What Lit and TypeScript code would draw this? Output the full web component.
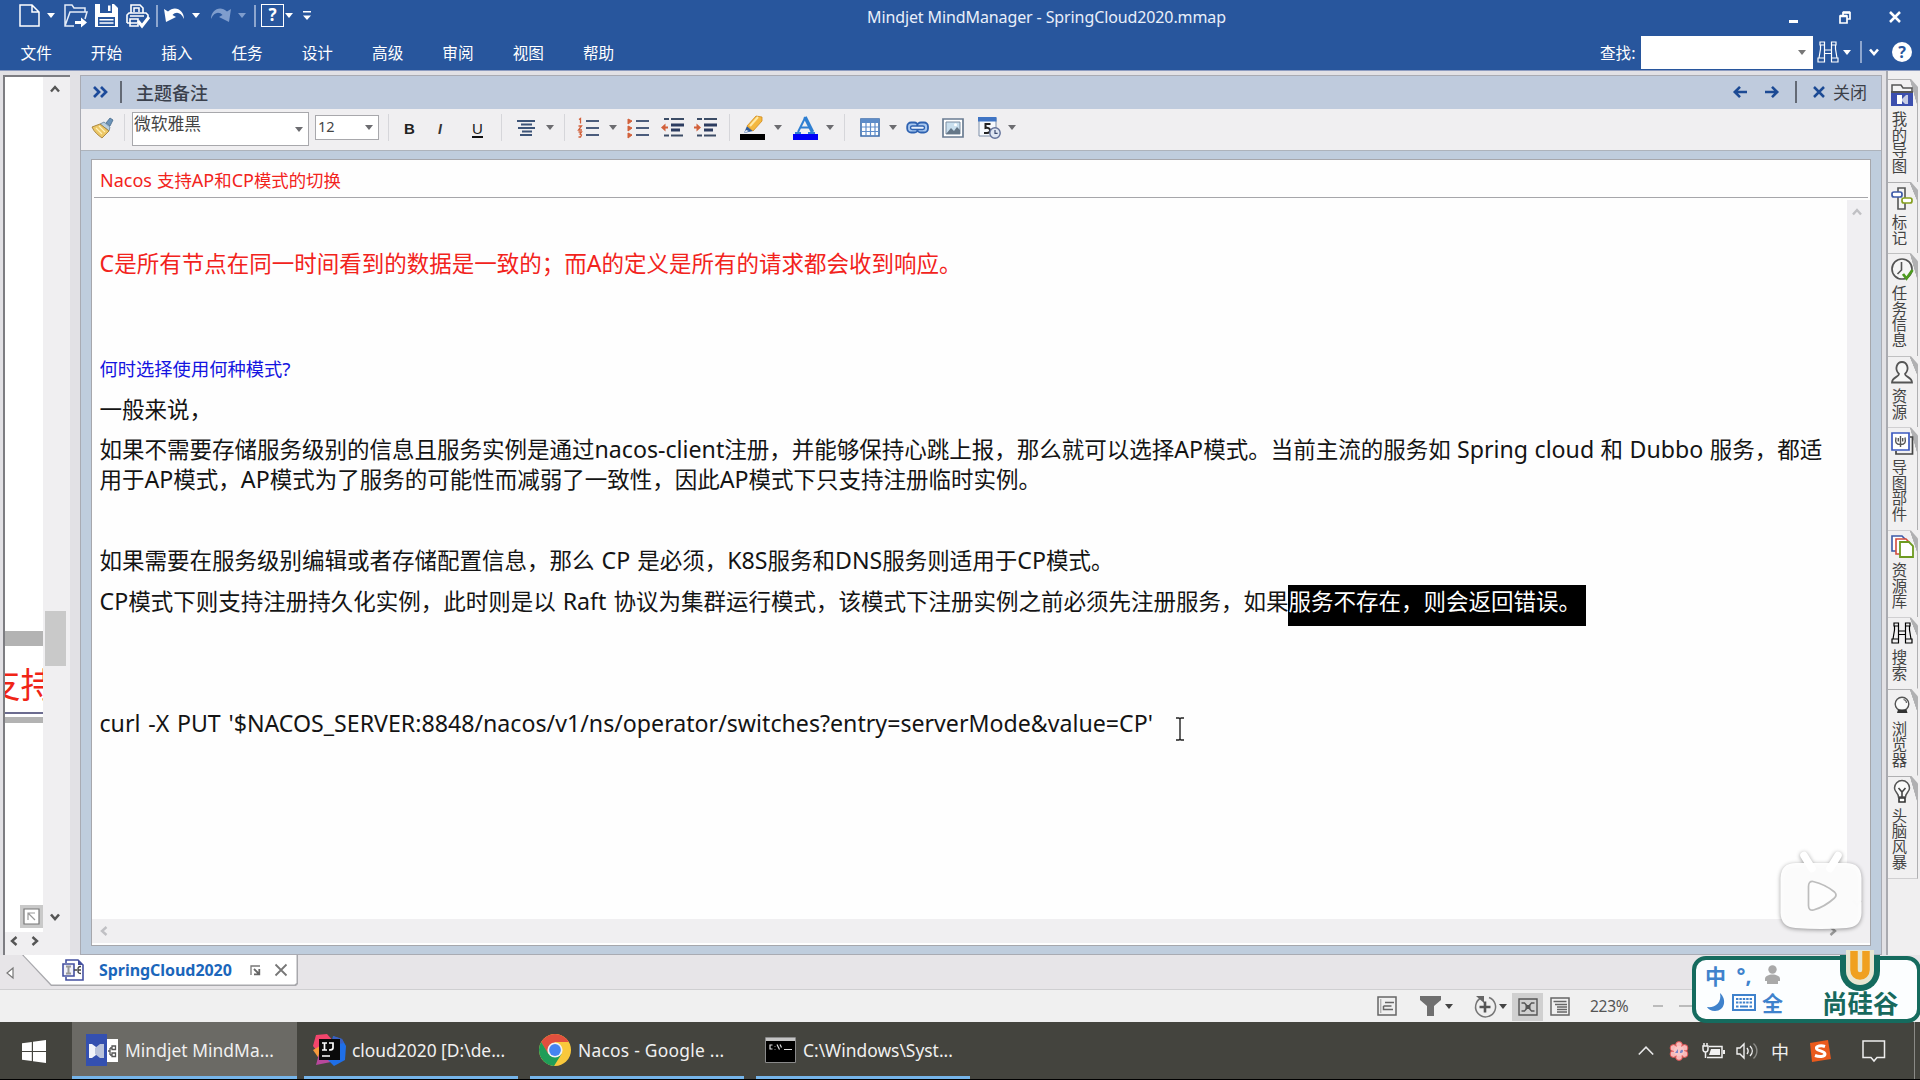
import { LitElement, html, css, svg } from "lit";
import { customElement, property } from "lit/decorators.js";

/* Splits a string so that Latin runs get their own face and spacing. */
const mix = (text: string) =>
  text.split(/([\x20-\x7e]+)/).map((part) =>
    /^[\x20-\x7e]+$/.test(part) ? html`<span class="lat">${part}</span>` : part
  );

const latin = css`
  .lat { font-family: "Noto Sans", "Open Sans", sans-serif; font-size: 1.03em; line-height: 1; white-space: pre; word-spacing: .4px; }
`;

const base = css`
  * { box-sizing: border-box; }
  svg { display: block; overflow: visible; }
`;

const art: Record<string, { w: number; h: number; g: unknown }> = {
  caret: { w: 8, h: 5, g: svg`<path d="M0 0h8L4 5z" fill="currentColor"/>` },
  vbar: { w: 2, h: 22, g: svg`<path d="M1 0v22" stroke="currentColor" stroke-width="1.4"/>` },
  newDoc: { w: 21, h: 23, g: svg`<path d="M1 1h12l7 7v14H1z M13 1v7h7" fill="none" stroke="#fff" stroke-width="1.5"/>` },
  open: { w: 24, h: 23, g: svg`<path d="M10 22H1V1h7l2 3h11v4M1 22l5-14h17l-2 7" fill="none" stroke="#e4ecf8" stroke-width="1.5"/><path d="M11 17h6v-3.500l6 5-6 5V20h-6z" fill="#fff"/>` },
  save: { w: 23, h: 23, g: svg`<path d="M0 0h19l4 4v19H0z" fill="#fff"/><path d="M5 0h12v9H5z M3 13h17v9H3z" fill="#28569d"/><path d="M13 1.500h2.500v5.500H13z M4.500 15h14v1.600h-14z M4.500 18.200h14v1.600h-14z" fill="#fff"/>` },
  print: { w: 24, h: 23, g: svg`<path d="M5 9V1h9l3 3v5M1 19v-8l2-2h17l2 2v3M1 19h10M4 22h8V15H4z" fill="none" stroke="#fff" stroke-width="1.600"/><path d="M8 8V4h5v4M4 12h14" stroke="#fff" stroke-width="1.500" fill="none"/><path d="M12 17l4 5 7-9" fill="none" stroke="#fff" stroke-width="3"/>` },
  undo: { w: 21, h: 17, g: svg`<path d="M0 2l2 13 10-5-3.500-2C12 4 17 5 20 12 20 3 11-2 4 4.500z" fill="currentColor"/>` },
  redo: { w: 21, h: 17, g: svg`<path d="M21 2l-2 13L9 10l3.500-2C9 4 4 5 1 12 1 3 10-2 17 4.500z" fill="currentColor"/>` },
  more: { w: 8, h: 9, g: svg`<path d="M0 0h8v1.500H0z M0 4.500h8L4 9z" fill="#fff"/>` },
  min: { w: 9, h: 3, g: svg`<path d="M0 0h9v3H0z" fill="#fff"/>` },
  restore: { w: 12, h: 13, g: svg`<path d="M4 4V1.500h7V8H8M1 5h7v7H1z" fill="none" stroke="#fff" stroke-width="1.700"/><path d="M1 5h7 M4 1.500h7" stroke="#fff" stroke-width="2.400"/>` },
  cross: { w: 12, h: 12, g: svg`<path d="M1 1l10 10M11 1L1 11" stroke="currentColor" stroke-width="2.500"/>` },
  thinCross: { w: 12, h: 12, g: svg`<path d="M.5.5l11 11M11.500.5l-11 11" stroke="#777" stroke-width="1.800"/>` },
  binoc: { w: 22, h: 22, g: svg`<path d="M3 1h4.500v3H3z M14.500 1H19v3h-4.500z M3.500 4v4L2 17M7.500 4v13M14.500 4v13M18.500 4v4L20 17 M7.500 9h7v3.500h-7z M1 17h6.500v4H1z M14.500 17H21v4h-6.500z" fill="none" stroke="currentColor" stroke-width="1.200"/>` },
  chevDown: { w: 10, h: 8, g: svg`<path d="M1 1.500l4 4.500 4-4.500" fill="none" stroke="currentColor" stroke-width="2.600"/>` },
  chevUp: { w: 10, h: 8, g: svg`<path d="M1 6.500L5 2l4 4.500" fill="none" stroke="currentColor" stroke-width="2.400"/>` },
  chevLeft: { w: 8, h: 10, g: svg`<path d="M6.500 1L2 5l4.500 4" fill="none" stroke="currentColor" stroke-width="2.400"/>` },
  chevRight: { w: 8, h: 10, g: svg`<path d="M1.500 1L6 5 1.500 9" fill="none" stroke="currentColor" stroke-width="2.400"/>` },
  dblRight: { w: 15, h: 12, g: svg`<path d="M1 1l5 5-5 5M8 1l5 5-5 5" fill="none" stroke="#1c4a9a" stroke-width="2.700"/>` },
  arrowL: { w: 14, h: 12, g: svg`<path d="M14 6H2M7 .8L1.800 6 7 11.200" fill="none" stroke="#1c4a94" stroke-width="2.600"/>` },
  arrowR: { w: 14, h: 12, g: svg`<path d="M0 6h12M7 .8L12.200 6 7 11.200" fill="none" stroke="#1c4a94" stroke-width="2.600"/>` },
  brush: { w: 21, h: 20, g: svg`<path d="M14 5l4-5 3 2-3 6z" fill="#6b93b8" stroke="#456a8c" stroke-width=".8"/><path d="M8 6l4-2 6 5-1 4z" fill="#b9cfe0" stroke="#5f7f98" stroke-width=".8"/><path d="M0 9l8-3 9 7-7 7C6 17 2 14 0 9z" fill="#ecc767" stroke="#a4803a" stroke-width=".9"/><path d="M4 10l6 6M7 8l6 6" stroke="#fff0b8" stroke-width="1.200"/>` },
  center: { w: 19, h: 16, g: svg`<path d="M0 1h18M4 4.500h11M1 8h17M5 11.500h10M3 15h12" stroke="#3d5478" stroke-width="2"/>` },
  numbered: { w: 21, h: 20, g: svg`<path d="M1 1.500l1.500-1v5M.5 8h3L.5 12h3.500M.5 14h3l-1.500 2 1.500 1-1 2H.5" fill="none" stroke="#d2603a" stroke-width="1.300"/><path d="M8 3h13M8 10h13M8 17h13" stroke="#4b5c7c" stroke-width="2.100"/>` },
  bullets: { w: 21, h: 20, g: svg`<path d="M0 1l4 2-4 3z M0 8l4 2-4 3z M0 15l4 2-4 3z" fill="#d2603a" stroke="#d2603a"/><path d="M8 3h13M8 10h13M8 17h13" stroke="#4b5c7c" stroke-width="2.100"/>` },
  outdent: { w: 23, h: 19, g: svg`<path d="M3 1h5M10 1h13M3 17.500h5M10 17.500h12" stroke="#3c4c66" stroke-width="1.800"/><path d="M10 7h13M10 12h9" stroke="#2c3c60" stroke-width="2.800"/><path d="M0 9.500l4.500-4v3H7v2H4.500v3z" fill="#d2603a"/>` },
  indent: { w: 23, h: 19, g: svg`<path d="M3 1h5M10 1h13M3 17.500h5M10 17.500h12" stroke="#3c4c66" stroke-width="1.800"/><path d="M10 7h13M10 12h9" stroke="#2c3c60" stroke-width="2.800"/><path d="M7 9.500l-4.500-4v3H0v2h2.500v3z" fill="#d2603a"/>` },
  marker: { w: 25, h: 24, g: svg`<path d="M0 18h25v6H0z" fill="#000"/><path d="M4 17l3-7 6 5z" fill="#2f5c9c"/><path d="M4 17l2-3 3 1z" fill="#e8edf5"/><path d="M7 10L16 0l6 1v4l-9 10z" fill="#f4b840" stroke="#d08c20" stroke-width=".8"/><path d="M10 10l8-9" stroke="#ffe9a6" stroke-width="2"/>` },
  fontColor: { w: 25, h: 24, g: svg`<path d="M0 18h25v6H0z" fill="#0000f6"/><path d="M5 16L12.500 1" fill="none" stroke="#2f7fd2" stroke-width="2"/><path d="M12 1l7.500 15" fill="none" stroke="#2f7fd2" stroke-width="3.600"/><path d="M8 11.500h9M2 17h6M15 17h7" stroke="#2f7fd2" stroke-width="2"/>` },
  table: { w: 20, h: 19, g: svg`<path d="M1 1h18v17H1z" fill="#fff" stroke="#3e6eac" stroke-width="1.600"/><path d="M1 1h18v4H1z" fill="#5d8cc8"/><path d="M1 9h18M1 13.500h18M6 5v13M10.500 5v13M15 5v13" stroke="#5f8dca" stroke-width="1.200"/>` },
  link: { w: 23, h: 13, g: svg`<rect x="1.200" y="1.500" width="11" height="10" rx="4" fill="#a9c8f0" stroke="#2f62b0" stroke-width="1.800"/><rect x="11" y="1.500" width="11" height="10" rx="4" fill="#a9c8f0" stroke="#2f62b0" stroke-width="1.800"/><rect x="4.500" y="5" width="14" height="3.500" rx="1.700" fill="#e8f1fc" stroke="#2f62b0" stroke-width="1.400"/>` },
  picture: { w: 22, h: 20, g: svg`<path d="M1 1h20v18H1z" fill="#fff" stroke="#6a7c92" stroke-width="1.700"/><path d="M4 4h14v12H4z" fill="#c9dfee" stroke="#7c8ea2" stroke-width="1"/><path d="M4 16l5-6 3 3 3-4 3 3v4z" fill="#657788"/><circle cx="13.500" cy="6.800" r="1.500" fill="#fff"/>` },
  date: { w: 23, h: 22, g: svg`<path d="M1 1h17v18H1z" fill="#f6f9fd" stroke="#7f8fa8" stroke-width="1"/><path d="M0 0h18.500v4.500H0z" fill="#3f74c4"/><path d="M12.500 7H7.500v4c5-1.500 6.500 5 1.500 5H6" fill="none" stroke="#222" stroke-width="2"/><circle cx="17" cy="16" r="5.200" fill="#dfe6f2" stroke="#62719a" stroke-width="1.400"/><path d="M17 13v3.300h2.600" fill="none" stroke="#3c4a70" stroke-width="1.200"/>` },
  fit: { w: 23, h: 23, g: svg`<path d="M0 0h23v23H0z" fill="#c9c9c9"/><path d="M4 4h15v15H4z" fill="#fff" stroke="#777" stroke-width="1.200"/><path d="M8 15V8h7M8 8l7 7" fill="none" stroke="#999" stroke-width="1.200"/>` },
  tri: { w: 8, h: 12, g: svg`<path d="M7 1v10L1 6z" fill="#fff" stroke="#777" stroke-width="1.200"/>` },
  mapDoc: { w: 22, h: 22, g: svg`<path d="M4 4V1h12l5 5v15H4v-3" fill="#fff" stroke="#4450a0" stroke-width="1.600"/><path d="M16 1v5h5z" fill="#4450a0"/><path d="M1 5h11v12H1z" fill="#f2f2fa" stroke="#4450a0" stroke-width="1.600"/><path d="M4 7.500h5M4 14.500h5M6.500 7.500v7" stroke="#999" stroke-width="2" fill="none"/><path d="M12 11h3M19 7.500c-3 0-3 1-3 3.500s0 3.500 3 3.500M16 11h3" fill="none" stroke="#444" stroke-width="1.400"/>` },
  popout: { w: 10, h: 10, g: svg`<path d="M1 10V1h9" fill="none" stroke="#777" stroke-width="1.300"/><path d="M4 4l5 5M9.300 4v5.300H4" fill="none" stroke="#666" stroke-width="1.800"/>` },
  stDoc: { w: 20, h: 20, g: svg`<path d="M1 1h18v18H1z" fill="none" stroke="#666" stroke-width="1.500"/><path d="M3.800 3v14" stroke="#999"/><path d="M8 6.500h9M6.500 10h8M6.500 10v3.500h5M10 13.500h6" fill="none" stroke="#666" stroke-width="1.500"/>` },
  funnel: { w: 21, h: 20, g: svg`<path d="M0 0h21v4l-7 6v10H7V10L0 4z" fill="#6f6f6f"/>` },
  addRound: { w: 22, h: 22, g: svg`<path d="M7 3a10 10 0 1 0 8-.5" fill="none" stroke="#777" stroke-width="1.500"/><path d="M2 1h8v7z" fill="#666"/><path d="M11 6.500v11M5.500 12h11" stroke="#555" stroke-width="2.600"/>` },
  mapView: { w: 20, h: 18, g: svg`<path d="M1 1h18v16H1z" fill="none" stroke="#555" stroke-width="1.400"/><path d="M3.500 5h3l7 8h3M3.500 13h3l7-8h3" fill="none" stroke="#555" stroke-width="1.300"/><path d="M7.500 7h5v4h-5z" fill="#555"/>` },
  outline: { w: 20, h: 19, g: svg`<path d="M1 1h18v17H1z" fill="none" stroke="#666" stroke-width="1.500"/><path d="M3.500 4.500h13M5 7.500h12M7 10h10M7 12.500h10M7 15h10" stroke="#666" stroke-width="1.400"/>` },
  minus: { w: 10, h: 2, g: svg`<path d="M0 1h10" stroke="#aaa" stroke-width="1.500"/>` },
  rail: { w: 40, h: 2, g: svg`<path d="M0 1h40" stroke="#aaa" stroke-width="1.500"/>` },
  win: { w: 24, h: 23, g: svg`<path d="M0 3.300L9.800 2v9H0z M11 1.800L24 0v11H11z M0 12h9.800v9L0 19.700z M11 12h13v11l-13-1.800z" fill="#fff"/>` },
  mindjet: { w: 32, h: 32, g: svg`<path d="M0 0h21v32H0z" fill="#3450b0"/><path d="M3 10h3l4 3v8l-4 3H3z" fill="#f2f4fa"/><path d="M9 14l5-4h4v14h-4l-5-4z" fill="#b9c2da"/><path d="M21 5h11v23H21z" fill="#fff"/><path d="M22 17h2M26 12h3.500v3.500H26zM26 19h3.500v3.500H26zM24 14v7M24 14h2M24 21h2" fill="none" stroke="#555" stroke-width="1.300"/>` },
  idea: { w: 33, h: 33, g: svg`<path d="M3 2l11-1 8 9L7 22 0 13z" fill="#f3456c"/><path d="M0 17l7-4v14z" fill="#f79a3c"/><path d="M3 32l4-15 11 12z" fill="#b8489c"/><path d="M20 3l9 3 4 7-1 14-11 6-6-6z" fill="#1f6fe8"/><path d="M20 3l9 3 2 4-10 2z" fill="#3a5fc0"/><path d="M6 6h21v21H6z" fill="#0a0a0a"/><path d="M9 10h5M11.500 10v7M9 17h5M16 10h4v5c0 2-2 2-4 2M9 23h8" fill="none" stroke="#fff" stroke-width="1.700"/>` },
  chrome: { w: 32, h: 32, g: svg`<circle cx="16" cy="16" r="16" fill="#f9c83c"/><path d="M16 8h13.850A16 16 0 0 0 2.150 8L9 20z" fill="#e2503e"/><path d="M2.150 8A16 16 0 0 0 15 32l7.500-12L16 16 9.500 20z" fill="#1f9d58"/><circle cx="16" cy="16" r="7.600" fill="#f2f2f2"/><circle cx="16" cy="16" r="5.900" fill="#4584f2"/>` },
  cmd: { w: 31, h: 26, g: svg`<path d="M.5.5h30v25H.5z" fill="#000" stroke="#8a8a8a"/><path d="M1 1h29v3H1z" fill="#c4c4c4"/><path d="M7.500 8H5v4h2.500M10 9v.500M10 12v.5M12 7.500l2.500 5M15 7.500l1.500 3M19 12.500h8" fill="none" stroke="#ddd" stroke-width="1.200"/>` },
  trayUp: { w: 16, h: 9, g: svg`<path d="M.8 8.500L8 1.200l7.200 7.300" fill="none" stroke="#e8e8e8" stroke-width="1.600"/>` },
  flower: { w: 20, h: 20, g: svg`<g fill="#f7b9b9" stroke="#e04848" stroke-width=".9"><circle cx="10" cy="4" r="3.400"/><circle cx="15.500" cy="7" r="3.400"/><circle cx="15.500" cy="13" r="3.400"/><circle cx="10" cy="16" r="3.400"/><circle cx="4.500" cy="13" r="3.400"/><circle cx="4.500" cy="7" r="3.400"/></g><circle cx="10" cy="10" r="5.200" fill="#f9c6c6"/><path d="M6 12l3-4v4zM11 12c0-4 3-4 3-2s-2 2-3 2z" fill="#7a86c8"/>` },
  power: { w: 23, h: 18, g: svg`<path d="M1 4v3c0 4 5 4 5 0V4zM2 1v3M5 1v3M3.500 10v6" fill="none" stroke="#f0f0f0" stroke-width="1.500"/><path d="M7 4.500h13v11H5" fill="none" stroke="#f0f0f0" stroke-width="1.500"/><path d="M9 7h9v6H7z M21 8h2v4h-2z" fill="#f0f0f0"/>` },
  sound: { w: 23, h: 18, g: svg`<path d="M1 6h3l4-4v14l-4-4H1z" fill="none" stroke="#f0f0f0" stroke-width="1.400"/><path d="M11 6c1.500 2 1.500 4 0 6M14 4c3 3 3 7 0 10" fill="none" stroke="#f0f0f0" stroke-width="1.400"/><path d="M17.500 1.500c4.500 4 4.500 11 0 15" fill="none" stroke="#8c8c88" stroke-width="1.400"/>` },
  sogou: { w: 22, h: 22, g: svg`<path d="M1 3L19 0l3 19-19 3z" fill="#ea5a1c"/><path d="M16 6.500c-4-1.500-9-.5-8.500 2S16 11 16 14s-6 3-10 1.500" fill="none" stroke="#fff" stroke-width="3"/>` },
  notice: { w: 24, h: 22, g: svg`<path d="M1 1h21.500v16.500H15L12 21l-3-3.500H1z" fill="none" stroke="#eee" stroke-width="1.500"/>` },
  person: { w: 15, h: 19, g: svg`<circle cx="7.500" cy="4.500" r="4.200" fill="#a9a9a9"/><path d="M0 14c0-6 15-6 15 0v2h-2v3H2v-3H0z" fill="#a9a9a9"/>` },
  moon: { w: 18, h: 18, g: svg`<path d="M13 0c7 6 5 18-5 18-4 0-7-2-8-4 8 1 15-4 13-14z" fill="#3f82cc"/>` },
  keys: { w: 24, h: 17, g: svg`<path d="M1 1h22v15H1z" fill="#fff" stroke="#3f82cc" stroke-width="2"/><path d="M4 5h16M4 8.500h16" stroke="#3f82cc" stroke-width="2" stroke-dasharray="2.400 1"/><path d="M4 12.500h2.500M8 12.500h8M17.500 12.500h2.500" stroke="#3f82cc" stroke-width="2"/>` },
  maps: { w: 22, h: 22, g: svg`<path d="M1 8V1h9l2 3h9v4" fill="#f4f4f4" stroke="#555" stroke-width="1.500"/><path d="M0 7h22v15H0z" fill="#3c4fae"/><path d="M0 7h22v2H0z" fill="#555"/><path d="M6 11h5v9H6z" fill="#fff"/><path d="M11 15l4-4h2v9h-3l-3-3z" fill="#c6cbe4"/>` },
  tags: { w: 22, h: 23, g: svg`<path d="M7 1h7v21H7z" fill="#f4f4f4" stroke="#555" stroke-width="1.600"/><rect x="1" y="5" width="10" height="5" rx="2" fill="#fff" stroke="#3c59a8" stroke-width="1.700"/><rect x="11" y="11" width="10" height="5" rx="2" fill="#fff" stroke="#86a020" stroke-width="1.700"/>` },
  clock: { w: 22, h: 22, g: svg`<circle cx="11" cy="11" r="10" fill="#f6f6f6" stroke="#555" stroke-width="1.700"/><path d="M10.500 4v8l-4 4" fill="none" stroke="#555" stroke-width="1.600"/><path d="M12 16l3.500 4.500L21.500 12" fill="none" stroke="#4d9a20" stroke-width="2.800"/>` },
  res: { w: 22, h: 23, g: svg`<path d="M8 13C3 8 6 1 11 1s8 7 3 12c0 3 7 3 7 8.500H1C1 16 8 16 8 13z" fill="#f6f6f6" stroke="#555" stroke-width="1.800"/>` },
  parts: { w: 22, h: 23, g: svg`<path d="M19 5h2.500v17H5v-3" fill="none" stroke="#444" stroke-width="1.700"/><path d="M1 1h17v17H1z" fill="#fff" stroke="#3c59c0" stroke-width="1.700"/><path d="M9.500 4v11M5 5.500c-1 5 0 7 4.500 7s5.500-2 4.500-7M7.300 6v3.500M11.700 6v3.500" fill="none" stroke="#555" stroke-width="1.400"/>` },
  lib: { w: 23, h: 23, g: svg`<path d="M1 1h10l3 3v12H1z" fill="#fff" stroke="#3c59a8" stroke-width="1.600"/><path d="M5 4h10l3 3v12H5z" fill="#fff" stroke="#d24c3c" stroke-width="1.600"/><path d="M9 7h9l4 4v11H9z" fill="#fff" stroke="#6d9a20" stroke-width="1.800"/>` },
  globe: { w: 22, h: 18, g: svg`<circle cx="11" cy="8" r="6.800" fill="#fafafa" stroke="#555" stroke-width="1.400"/><path d="M12.500 3.500c2 .5 3 2 3 3.500" fill="none" stroke="#666" stroke-width="1.200"/><path d="M7 13.500h8.500l1 3.500H6z" fill="#333"/>` },
  bulb: { w: 22, h: 23, g: svg`<path d="M7.500 17c0-4-4-5-4-9a7.500 7.500 0 0 1 15 0c0 4-4 5-4 9z" fill="#fafafa" stroke="#555" stroke-width="1.500"/><path d="M7.500 8l3.500 4 3.500-4M11 12v5" fill="none" stroke="#444" stroke-width="1.600"/><path d="M8 18h6v4H8z" fill="#fff" stroke="#333" stroke-width="1.600"/>` },
  ibeam: { w: 10, h: 24, g: svg`<path d="M1 1h3l1 1 1-1h3M5 2v20M1 23h3l1-1 1 1h3" fill="none" stroke="#222" stroke-width="1.400"/>` },
  tv: { w: 82, h: 78, g: svg`<path d="M24 3.500l8 13M58 3.500l-8 13" stroke="#fff" stroke-width="7.500" stroke-linecap="round"/><path d="M16 11h50q15 0 15.500 15v35q-.5 14-15 15-25.500 1.800-51 0Q1 75 .5 61V26Q1 11 16 11z" fill="#fff" fill-opacity=".96"/><path d="M33 29.500q-4.500-.5-4.500 5v19q0 5.500 5 4.500 11-3 21-12 3-3 0-6-9-7.500-21.500-10.500z" fill="#fdfdfd" stroke="#bdbdbd" stroke-width="1.700"/>` },
  logoU: { w: 42, h: 42, g: svg`<path d="M1 5h40v16a20 20 0 0 1-40 0z" fill="#156b5e"/><path d="M7 0h28v21a14 14 0 0 1-28 0z" fill="#e8e6d2"/><path d="M15 1v19a6 6 0 0 0 12 0V1" fill="none" stroke="#f0a020" stroke-width="7.500"/>` },
};

@customElement("ui-icon")
export class UiIcon extends LitElement {
  @property() name = "caret";
  static styles = css`:host { display: inline-block; line-height: 0; } svg { display: block; overflow: visible; }`;
  render() {
    const a = art[this.name];
    return html`<svg width=${a.w} height=${a.h} viewBox="0 0 ${a.w} ${a.h}">${a.g}</svg>`;
  }
}

@customElement("title-bar")
export class TitleBar extends LitElement {
  static styles = [base, latin, css`
    :host { display: block; height: 70px; background: #28569d; color: #fff; font-family: "Noto Sans CJK SC", sans-serif; }
    .top { display: grid; grid-template-columns: 867px 922px auto; height: 34px; }
    .quick { display: grid; height: 31px; padding-left: 19px; align-items: center; justify-items: start;
      grid-template-columns: 28px 17px 31px 31px 30px 8px 28px 18px 28px 16px 7px 24px 18px 20px; }
    .dim { color: #7f9dcd; }
    .light { color: #b9c9e4; }
    .help { width: 23px; height: 23px; border: 1.5px solid #fff; font: bold 17px/20px "Noto Sans", sans-serif; text-align: center; }
    .name { font: 16px/34px "Noto Sans", sans-serif; white-space: pre; letter-spacing: -.11px; color: #e9effa; }
    .wins { display: grid; grid-template-columns: 50px 50px 20px; height: 34px; align-items: center; }
    .wins .low { padding-top: 8px; }
    .bottom { display: grid; grid-template-columns: 1600px auto; height: 36px; }
    .menu { display: flex; padding-left: 1px; font-size: 15.6px; line-height: 36px; }
    .menu span { width: 70.3px; text-align: center; }
    .find { display: grid; grid-template-columns: 41px 176px 26px 17px 9px 23px 22px; height: 36px; align-items: center; font-size: 15.6px; justify-items: start; }
    .find .field { display: flex; justify-content: flex-end; align-items: center; width: 172px; height: 33px; padding-right: 7px; background: #fff; color: #777; }
    .q { width: 20px; height: 20px; border-radius: 50%; background: #fff; color: #28569d; font: bold 16px/20px "Noto Sans", sans-serif; text-align: center; }
  `];
  render() {
    const i = (n: string, c = "") => html`<ui-icon name=${n} class=${c}></ui-icon>`;
    return html`
      <div class="top">
        <div class="quick">
          ${i("newDoc")}${i("caret")}${i("open")}${i("save")}${i("print")}${i("vbar", "light")}${i("undo")}${i("caret")}
          ${i("redo", "dim")}${i("caret", "dim")}${i("vbar", "light")}<div class="help">?</div>${i("caret")}${i("more")}
        </div>
        <div class="name">Mindjet MindManager - SpringCloud2020.mmap</div>
        <div class="wins">${i("min", "low")}${i("restore")}${i("cross")}</div>
      </div>
      <div class="bottom">
        <nav class="menu">${["文件", "开始", "插入", "任务", "设计", "高级", "审阅", "视图", "帮助"].map((m) => html`<span>${m}</span>`)}</nav>
        <div class="find">
          <span>${mix("查找:")}</span><div class="field">${i("caret")}</div>${i("binoc")}${i("caret")}${i("vbar", "light")}
          ${i("chevDown")}<div class="q">?</div>
        </div>
      </div>`;
  }
}

@customElement("map-strip")
export class MapStrip extends LitElement {
  static styles = [base, css`
    :host { display: grid; grid-template-columns: 40px 25px; grid-template-rows: auto 23px; height: 880px; margin: 4px 10px 0 3px;
      border-left: 2px solid #7d7d82; border-top: 2px solid #7d7d82; background: #f0eff1; width: 67px; }
    .canvas { position: relative; background: #fff; overflow: hidden; width: 38px; }
    .bar { position: absolute; left: 0; width: 38px; background: #b3b3b3; }
    .b1 { top: 554px; height: 15px; }
    .b2 { top: 640px; height: 6px; }
    .rule { position: absolute; left: 0; top: 635px; width: 38px; height: 2px; background: #6c6c90; }
    .topic { position: absolute; left: -20px; top: 580px; color: #f02416; font: 35.5px/52px "Noto Sans CJK SC", sans-serif; white-space: nowrap; }
    .fit { position: absolute; left: 15px; top: 828px; }
    .scroll { display: flex; flex-direction: column; padding: 8px 10px 11px 5px; color: #555; }
    .thumb { width: 21px; height: 55px; background: #c9c9c9; margin: 518px 0 auto -5px; flex: none; }
    .ends { display: flex; gap: 13px; padding: 4px 0 0 5px; color: #555; }
  `];
  render() {
    return html`
      <div class="canvas">
        <div class="bar b1"></div><div class="topic">支持</div><div class="rule"></div><div class="bar b2"></div>
        <ui-icon class="fit" name="fit"></ui-icon>
      </div>
      <div class="scroll"><ui-icon name="chevUp"></ui-icon><div class="thumb"></div><ui-icon name="chevDown"></ui-icon></div>
      <div class="ends"><ui-icon name="chevLeft"></ui-icon><ui-icon name="chevRight"></ui-icon></div>`;
  }
}

@customElement("note-panel")
export class NotePanel extends LitElement {
  static styles = [base, latin, css`
    :host { display: flex; flex-direction: column; width: 1802px; height: 880px; margin-top: 4px; border: 1.5px solid #a9abb3; background: #bfcddd;
      font-family: "Noto Sans CJK SC", sans-serif; }
    .head { display: grid; grid-template-columns: 27px 16px 1597px 32px 30px 18px 20px auto; height: 33px; padding: 0 0 1px 12px; align-items: center; justify-items: start; background: #bfcbdd; color: #3c4048; flex: none; }
    .head .t { font-size: 18px; font-weight: 500; line-height: 30px; color: #3a404c; }
    .head .c { font-size: 17px; line-height: 30px; }
    .head .x { color: #1c4a94; }
    .tools { display: grid; height: 42px; flex: none; padding-left: 11px; align-items: center; justify-items: start; background: #f0eff1; color: #6c6c70;
      border-bottom: 1.5px solid #adb3bb; padding-bottom: 9px;
      grid-template-columns: 32px 8px 183px 73px 16px 32px 35px 30px 16px 29px 18px 14px 31px 19px 33px 33px 35px 11px 34px 19px 33px 18px 16px 29px 17px 36px 36px 30px 8px; }
    .sep { width: 1px; height: 27px; background: #d6d6da; }
    .face, .size { display: flex; justify-content: space-between; background: #fff; border: 1.5px solid #a8a8ac; color: #444; }
    .face { width: 177px; height: 34px; align-self: start; margin-top: 3px; padding: 0 5px 0 1px; font-size: 16.8px; line-height: 21px; }
    .face ui-icon { margin-top: 14px; }
    .size { width: 64px; height: 25px; padding: 0 5px 0 2px; font-family: "Noto Sans"; font-size: 14.5px; line-height: 20px; }
    .size ui-icon { margin-top: 9px; }
    .face ui-icon, .size ui-icon { color: #6c6c70; }
    .b { font: bold 15px/20px "Liberation Sans"; color: #222; padding-top: 3px; }
    .i { font: italic bold 14px/20px "Liberation Sans"; color: #333; padding: 3px 0 0 2px; }
    .u { font: 15px/14px "Liberation Sans"; color: #222; border-bottom: 2.5px solid #111; margin: 4px 0 0 1px; padding: 0; }
    .editor { display: flex; flex-direction: column; margin: 8px 10px 0 10px; height: 787px; border: 1.5px solid #a6a7ac; background: #fefefe; }
    .topic { height: 38px; margin: 0 2px; border-bottom: 1.5px solid #a6a6aa; padding-left: 6px; font-size: 17.4px; line-height: 40px; color: #f2231c; flex: none; }
    .topic .lat { font-size: 18px; }
    .area { display: grid; grid-template-columns: 1fr 23px; grid-template-rows: 721px 24px; }
    .text { padding: 48.5px 0 0 7.5px; font-size: 22.5px; line-height: 30px; color: #141414; white-space: nowrap; }
    p { margin: 0; }
    .red { color: #f2231c; }
    .blue { margin-top: 76px; font-size: 18.3px; color: #1414e0; }
    .near { margin-top: 10.5px; }
    .first { margin-top: 10px; }
    .far { margin-top: 50.5px; }
    .last { margin-top: 11px; }
    .last .lat, .far .lat { word-spacing: 1px; }
    .code { margin-top: 92px; }
    .code .lat { word-spacing: 1.7px; }
    .sel { display: inline-block; vertical-align: top; height: 41px; line-height: 30px; margin: 0 0 -11px; padding: 0 5px 0 0; background: #000; color: #fff; }
    .v { display: flex; flex-direction: column; justify-content: space-between; background: #f0eff2; margin-top: 2px; padding: 8px 5px 12px; color: #c0c0c4; }
    .h { grid-column: 1 / 3; display: flex; justify-content: space-between; align-items: center; background: #f0eff1; padding: 0 33px 0 8px; color: #c0c0c4; }
    .h .r { color: #999; }
  `];
  render() {
    const i = (n: string, c = "") => html`<ui-icon name=${n} class=${c}></ui-icon>`;
    const sep = html`<div class="sep"></div>`;
    return html`
      <header class="head">${i("dblRight")}${i("vbar")}<span class="t">主题备注</span>${i("arrowL")}${i("arrowR")}${i("vbar")}${i("cross", "x")}<span class="c">关闭</span></header>
      <div class="tools">
        ${i("brush")}${sep}<div class="face">微软雅黑${i("caret")}</div><div class="size">12${i("caret")}</div>${sep}
        <span class="b">B</span><span class="i">I</span><span class="u">U</span>${sep}${i("center")}${i("caret")}${sep}
        ${i("numbered")}${i("caret")}${i("bullets")}${i("outdent")}${i("indent")}${sep}${i("marker")}${i("caret")}
        ${i("fontColor")}${i("caret")}${sep}${i("table")}${i("caret")}${i("link")}${i("picture")}${i("date")}${i("caret")}
      </div>
      <section class="editor">
        <div class="topic">${mix("Nacos 支持AP和CP模式的切换")}</div>
        <div class="area">
          <article class="text">
            <p class="red">${mix("C是所有节点在同一时间看到的数据是一致的；而A的定义是所有的请求都会收到响应。")}</p>
            <p class="blue">${mix("何时选择使用何种模式?")}</p>
            <p class="first">一般来说，</p>
            <p class="near">${mix("如果不需要存储服务级别的信息且服务实例是通过nacos-client注册，并能够保持心跳上报，那么就可以选择AP模式。当前主流的服务如 Spring cloud 和 Dubbo 服务，都适")}<br />${mix("用于AP模式，AP模式为了服务的可能性而减弱了一致性，因此AP模式下只支持注册临时实例。")}</p>
            <p class="far">${mix("如果需要在服务级别编辑或者存储配置信息，那么 CP 是必须，K8S服务和DNS服务则适用于CP模式。")}</p>
            <p class="last">${mix("CP模式下则支持注册持久化实例，此时则是以 Raft 协议为集群运行模式，该模式下注册实例之前必须先注册服务，如果")}<span class="sel">服务不存在，则会返回错误。</span></p>
            <p class="code">${mix("curl -X PUT '$NACOS_SERVER:8848/nacos/v1/ns/operator/switches?entry=serverMode&value=CP'")}</p>
          </article>
          <div class="v">${i("chevUp")}${i("chevDown")}</div>
          <div class="h">${i("chevLeft")}${i("chevRight", "r")}</div>
        </div>
      </section>`;
  }
}

@customElement("side-tabs")
export class SideTabs extends LitElement {
  static styles = [base, css`
    :host { display: block; width: 34px; height: 885px; margin-left: 4px; padding-top: 8px; border-left: 2px solid #a9aab0; background: #f0eff0; }
    .tab { display: flex; flex-direction: column; align-items: center; width: 30px; padding: 3px 1px 0 0; border: 1.5px solid #b0b0b2; border-left: 0; border-bottom: 0;
      background: linear-gradient(to bottom left, #b0b0b2 6.5px, #f1f0f1 7px); clip-path: polygon(0 0, 23px 0, 100% 8px, 100% 100%, 0 100%); }
    .tab:last-child { border-bottom: 1.5px solid #b0b0b2; }
    .n2 { height: 71.200px; } .n3 { height: 87px; } .n4 { height: 103px; }
    .pic { height: 24px; display: flex; align-items: center; }
    .word { width: 16px; margin: 4px 5px 0 0; font: 15.4px/15.5px "Noto Sans CJK SC", sans-serif; color: #444; word-break: break-all; text-align: center; }
  `];
  render() {
    const tabs = [["maps", "我的导图"], ["tags", "标记"], ["clock", "任务信息"], ["res", "资源"], ["parts", "导图部件"], ["lib", "资源库"], ["binoc", "搜索"], ["globe", "浏览器"], ["bulb", "头脑风暴"]];
    return html`${tabs.map(([n, t]) => html`<div class="tab n${t.length}"><div class="pic"><ui-icon name=${n}></ui-icon></div><div class="word">${t}</div></div>`)}`;
  }
}

@customElement("doc-tabs")
export class DocTabs extends LitElement {
  static styles = [base, css`
    :host { display: grid; grid-template-columns: 22px 276px; height: 35px; background: #e7e5e8; border-bottom: 1.5px solid #cfcfd1; }
    .prev { padding: 10px 0 0 6px; }
    .tab { display: grid; grid-template-columns: 40px 37px 151px 25px auto; align-items: center; height: 31px; padding-bottom: 2px; background: #a8a8ac; clip-path: polygon(0 0, 100% 0, 100% 29px, 274px 100%, 29px 100%); position: relative; }
    .tab::before { content: ""; position: absolute; inset: 0 1.5px 1.5px 1.5px; background: #fff; clip-path: polygon(0 0, 100% 0, 100% 28px, 271px 100%, 28px 100%); }
    .tab > * { position: relative; }
    .name { font: bold 16px/28px "Noto Sans", sans-serif; letter-spacing: -.05px; color: #1b66bb; }
  `];
  render() {
    return html`<div class="prev"><ui-icon name="tri"></ui-icon></div>
      <div class="tab"><span></span><ui-icon name="mapDoc"></ui-icon><span class="name">SpringCloud2020</span><ui-icon name="popout"></ui-icon><ui-icon name="thinCross"></ui-icon></div>`;
  }
}

@customElement("status-bar")
export class StatusBar extends LitElement {
  static styles = [base, css`
    :host { display: grid; grid-template-columns: 43px 25px 29px 25px 13px 38px 40px 63px 26px 40px; height: 32px; padding-left: 1377px; align-items: center; justify-items: start; background: #f0f0f0; color: #444; }
    .on { display: flex; align-items: center; justify-content: center; width: 31px; height: 28px; background: #d0d0d0; margin-top: 2px; }
    .pct { font: 15.5px/30px "Noto Sans", sans-serif; color: #555; letter-spacing: -.3px; }
  `];
  render() {
    const i = (n: string) => html`<ui-icon name=${n}></ui-icon>`;
    return html`${i("stDoc")}${i("funnel")}${i("caret")}${i("addRound")}${i("caret")}<div class="on">${i("mapView")}</div>${i("outline")}<span class="pct">223%</span>${i("minus")}${i("rail")}`;
  }
}

@customElement("task-bar")
export class TaskBar extends LitElement {
  static styles = [base, css`
    :host { display: grid; grid-template-columns: 72px 232px 226px 226px 882px auto; height: 58px; background: #44443e; border-bottom: 1.500px solid #000; color: #f0f0f0; }
    .start { padding: 18px 0 0 22px; }
    .task { display: flex; align-items: center; gap: 7px; width: 214px; padding: 1px 0 0 9px; border-bottom: 3px solid #76b5ea; font: 17.4px/30px "Noto Sans", sans-serif; white-space: pre; }
    .task:nth-child(4) { letter-spacing: .25px; }
    .task:nth-child(3) { gap: 6px; }
    .active { width: 225px; padding-left: 14px; background: #6b6a65; letter-spacing: .05px; }
    .tray { display: grid; grid-template-columns: 31px 33px 34px 35px 38px 53px 52px 2px; align-items: center; justify-items: start; }
    .ime { font: 18px/26px "Noto Sans CJK SC", sans-serif; }
    .edge { width: 1px; height: 57px; background: #8a8a86; }
  `];
  render() {
    const i = (n: string) => html`<ui-icon name=${n}></ui-icon>`;
    return html`
      <div class="start">${i("win")}</div>
      <div class="task active">${i("mindjet")}<span>Mindjet MindMa...</span></div>
      <div class="task">${i("idea")}<span>cloud2020 [D:\\de...</span></div>
      <div class="task">${i("chrome")}<span>Nacos - Google ...</span></div>
      <div class="task">${i("cmd")}<span>C:\\Windows\\Syst...</span></div>
      <div class="tray">${i("trayUp")}${i("flower")}${i("power")}${i("sound")}<span class="ime">中</span>${i("sogou")}${i("notice")}<div class="edge"></div></div>`;
  }
}

@customElement("ime-badge")
export class ImeBadge extends LitElement {
  static styles = [base, css`
    :host { display: grid; grid-template-columns: 126px auto; width: 229px; height: 67px; border: 4.5px solid #156b5e; border-radius: 14px; background: #fcfeff; font-family: "Noto Sans CJK SC", sans-serif; }
    .keys { display: grid; grid-template-columns: 29px 28px 29px; grid-template-rows: 27px 28px; padding: 1px 0 0 5px; place-items: center; color: #3f82cc; font-weight: 700; }
    .zh { font-size: 21px; line-height: 26px; }
    .pt { font-size: 21px; line-height: 26px; font-family: "Noto Sans", sans-serif; }
    .brand { position: relative; padding: 25px 0 0 0; font-size: 25.5px; line-height: 34px; font-weight: 700; color: #17695d; white-space: nowrap; }
    .brand ui-icon { position: absolute; left: 17px; top: -10px; }
  `];
  render() {
    return html`<div class="keys"><span class="zh">中</span><span class="pt">°,</span><ui-icon name="person"></ui-icon><ui-icon name="moon"></ui-icon><ui-icon name="keys"></ui-icon><span class="zh">全</span></div>
      <div class="brand"><ui-icon name="logoU"></ui-icon>尚硅谷</div>`;
  }
}

@customElement("app-root")
export class AppRoot extends LitElement {
  static styles = [base, css`
    :host { display: flex; flex-direction: column; position: relative; width: 1920px; height: 1080px; overflow: hidden; background: #ededf0; }
    .main { display: flex; height: 885px; background: #e2e1e5; border-top: 1px solid #8d9cc0; flex: none; overflow: hidden; }
    .tv { position: absolute; left: 1780px; top: 852px; filter: drop-shadow(0 1px 2px rgba(0, 0, 0, .4)); }
    .ime { position: absolute; left: 1692px; top: 956px; }
    .cursor { position: absolute; left: 1175px; top: 717px; }
  `];
  render() {
    return html`
      <title-bar></title-bar>
      <div class="main"><map-strip></map-strip><note-panel></note-panel><side-tabs></side-tabs></div>
      <doc-tabs></doc-tabs>
      <status-bar></status-bar>
      <task-bar></task-bar>
      <ui-icon class="cursor" name="ibeam"></ui-icon>
      <ui-icon class="tv" name="tv"></ui-icon>
      <ime-badge class="ime"></ime-badge>`;
  }
}
